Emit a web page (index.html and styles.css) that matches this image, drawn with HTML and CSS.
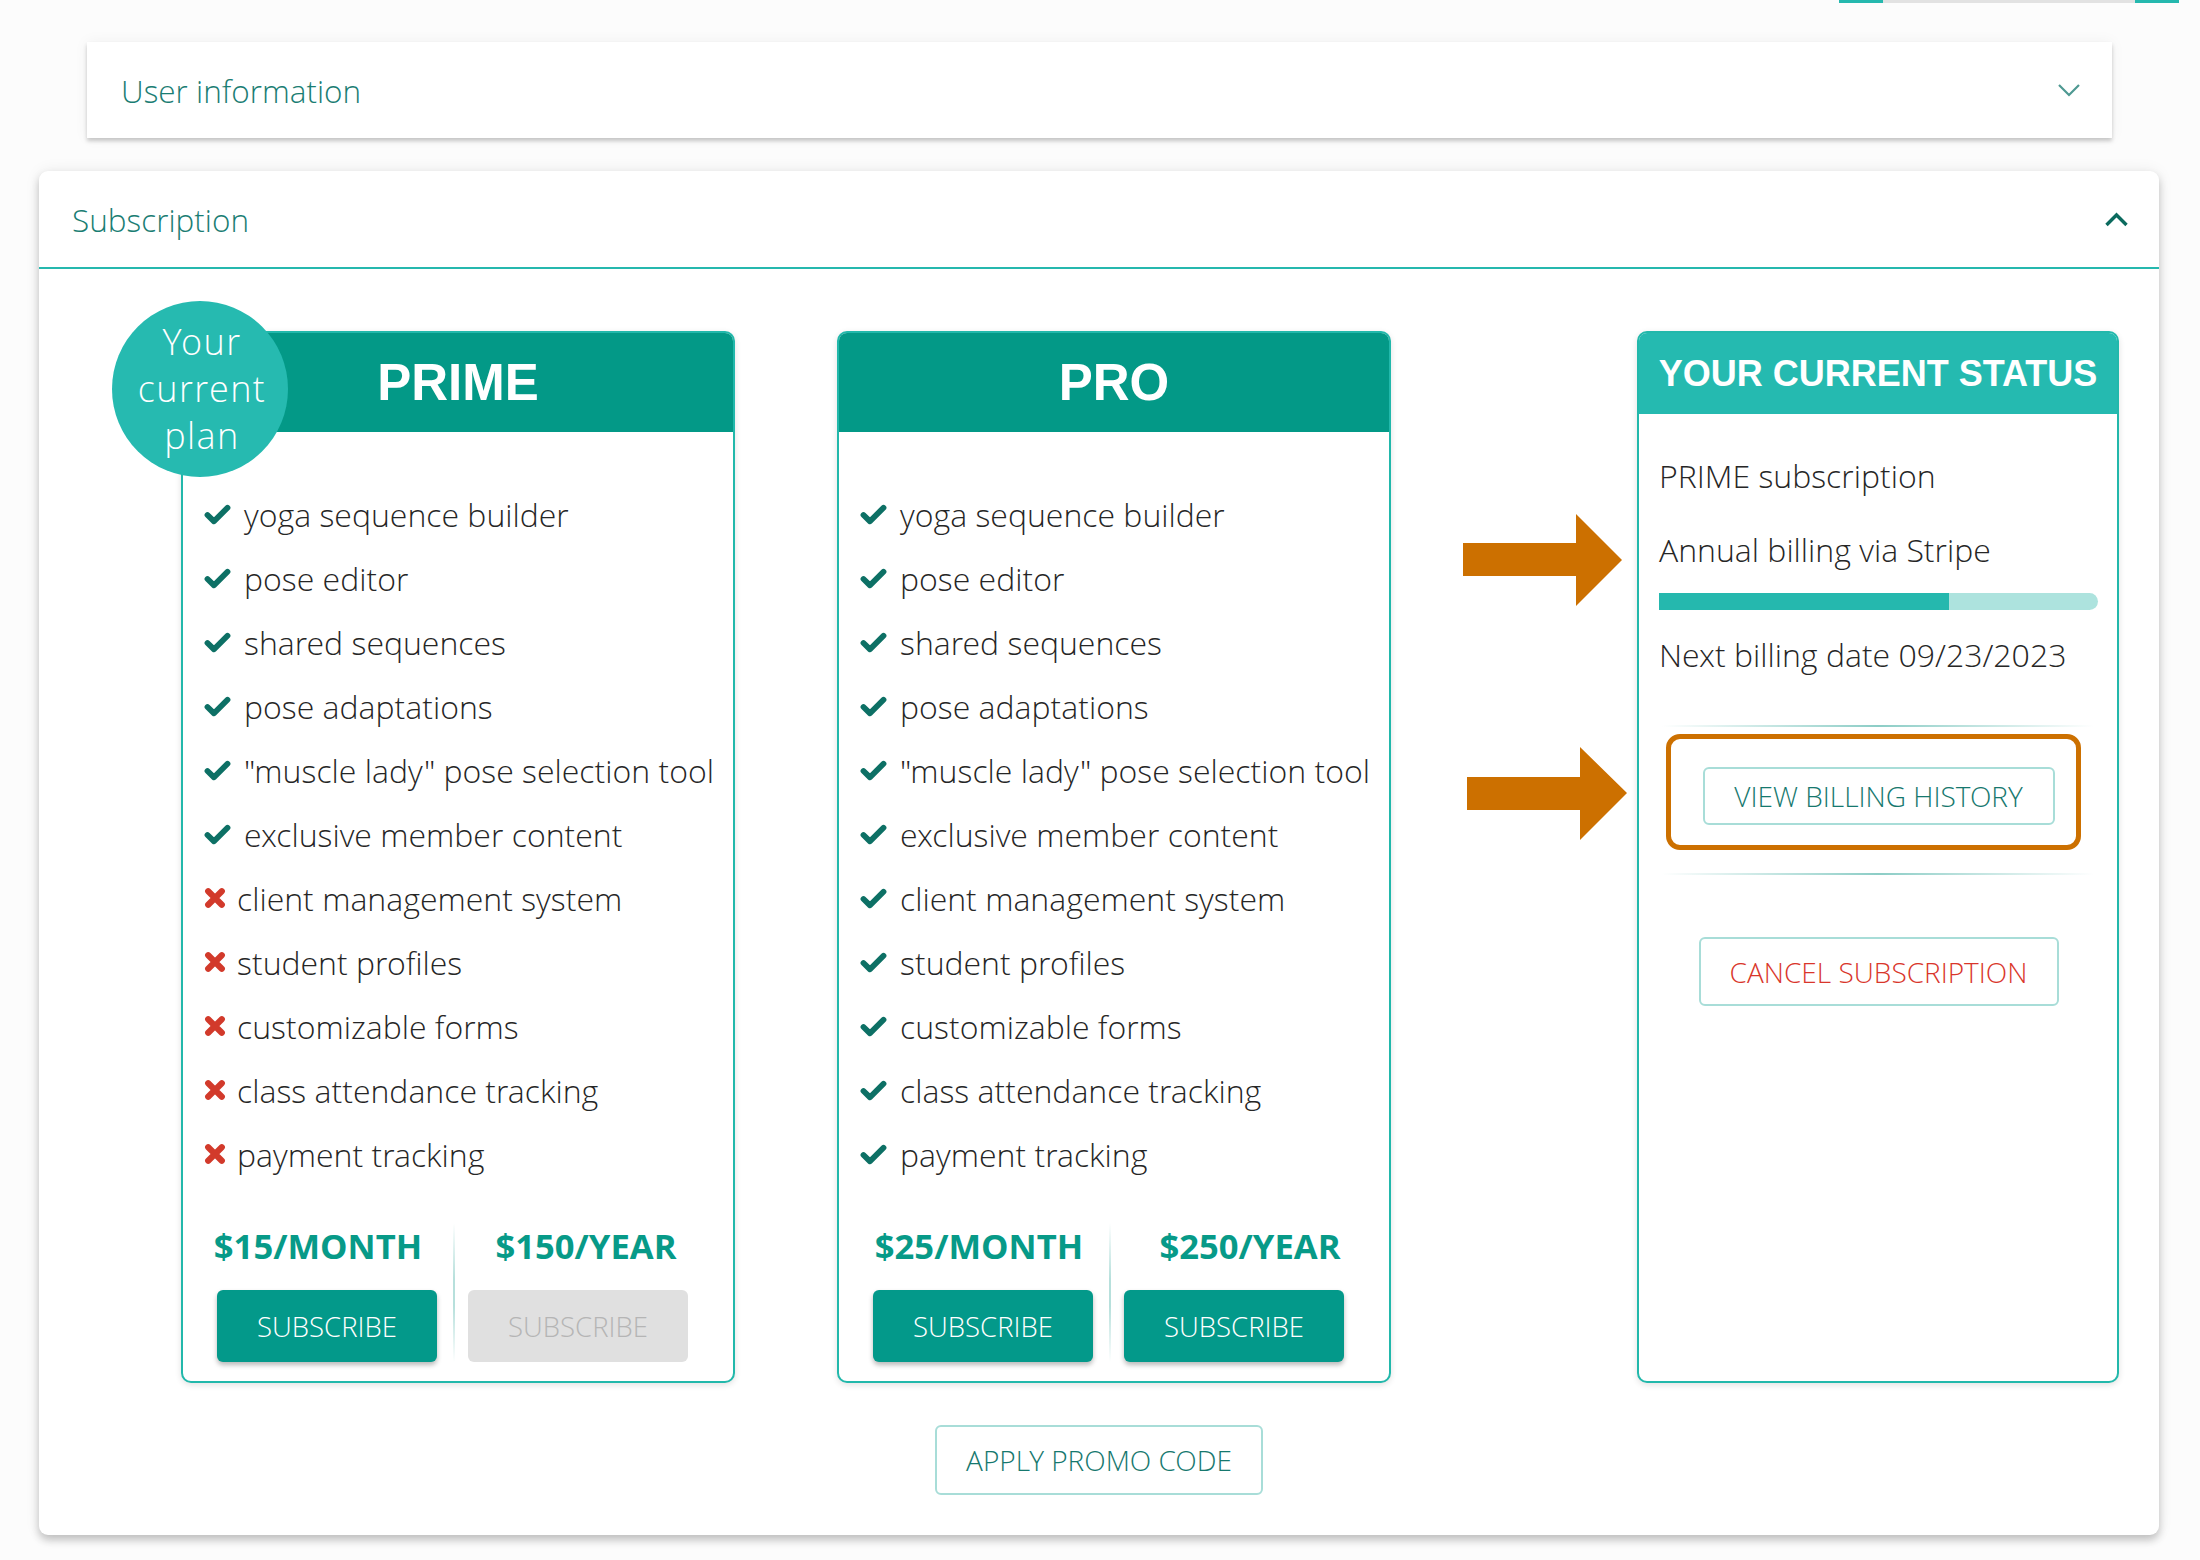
FILE: index.html
```html
<!DOCTYPE html>
<html lang="en">
<head>
<meta charset="utf-8">
<title>Subscription</title>
<link rel="stylesheet" href="styles.css">
</head>
<body>
<div class="tabline"><span class="seg-on"></span><span class="seg-mid"></span><span class="seg-on"></span></div>

<section class="panel-user">
  <span class="panel-title">User information</span>
  <svg class="chev-down" width="24" height="14" viewBox="0 0 24 14"><path d="M2 2 L12 12 L22 2" fill="none" stroke="#4e9992" stroke-width="2.2"/></svg>
</section>

<section class="panel-sub">
  <div class="sub-head">
    <span class="panel-title">Subscription</span>
    <svg class="chev-up" width="25" height="15" viewBox="0 0 25 15"><path d="M2.5 13 L12.5 3 L22.5 13" fill="none" stroke="#0b6a5e" stroke-width="3.4"/></svg>
  </div>
  <div class="sub-body">
    <div class="plans">
      <div class="plan plan-prime">
        <div class="badge"><span>Your</span><span>current</span><span>plan</span></div>
        <div class="plan-head">PRIME</div>
        <ul class="features">
          <li><svg class="ic-check" width="27" height="21" viewBox="0 0 27 21"><path d="M3.5 11 L10 17.3 L23.5 3.8"/></svg>yoga sequence builder</li>
          <li><svg class="ic-check" width="27" height="21" viewBox="0 0 27 21"><path d="M3.5 11 L10 17.3 L23.5 3.8"/></svg>pose editor</li>
          <li><svg class="ic-check" width="27" height="21" viewBox="0 0 27 21"><path d="M3.5 11 L10 17.3 L23.5 3.8"/></svg>shared sequences</li>
          <li><svg class="ic-check" width="27" height="21" viewBox="0 0 27 21"><path d="M3.5 11 L10 17.3 L23.5 3.8"/></svg>pose adaptations</li>
          <li><svg class="ic-check" width="27" height="21" viewBox="0 0 27 21"><path d="M3.5 11 L10 17.3 L23.5 3.8"/></svg>"muscle lady" pose selection tool</li>
          <li><svg class="ic-check" width="27" height="21" viewBox="0 0 27 21"><path d="M3.5 11 L10 17.3 L23.5 3.8"/></svg>exclusive member content</li>
          <li class="no"><svg class="ic-cross" width="22" height="22" viewBox="0 0 22 22"><path d="M4.2 4.2 L17.8 17.8 M17.8 4.2 L4.2 17.8"/></svg>client management system</li>
          <li class="no"><svg class="ic-cross" width="22" height="22" viewBox="0 0 22 22"><path d="M4.2 4.2 L17.8 17.8 M17.8 4.2 L4.2 17.8"/></svg>student profiles</li>
          <li class="no"><svg class="ic-cross" width="22" height="22" viewBox="0 0 22 22"><path d="M4.2 4.2 L17.8 17.8 M17.8 4.2 L4.2 17.8"/></svg>customizable forms</li>
          <li class="no"><svg class="ic-cross" width="22" height="22" viewBox="0 0 22 22"><path d="M4.2 4.2 L17.8 17.8 M17.8 4.2 L4.2 17.8"/></svg>class attendance tracking</li>
          <li class="no"><svg class="ic-cross" width="22" height="22" viewBox="0 0 22 22"><path d="M4.2 4.2 L17.8 17.8 M17.8 4.2 L4.2 17.8"/></svg>payment tracking</li>
        </ul>
        <div class="pricing">
          <div class="price-col first"><div class="price">$15/MONTH</div><button class="btn-sub">SUBSCRIBE</button></div>
          <div class="vdiv"></div>
          <div class="price-col second"><div class="price">$150/YEAR</div><button class="btn-sub disabled">SUBSCRIBE</button></div>
        </div>
      </div>

      <div class="plan plan-pro">
        <div class="plan-head">PRO</div>
        <ul class="features">
          <li><svg class="ic-check" width="27" height="21" viewBox="0 0 27 21"><path d="M3.5 11 L10 17.3 L23.5 3.8"/></svg>yoga sequence builder</li>
          <li><svg class="ic-check" width="27" height="21" viewBox="0 0 27 21"><path d="M3.5 11 L10 17.3 L23.5 3.8"/></svg>pose editor</li>
          <li><svg class="ic-check" width="27" height="21" viewBox="0 0 27 21"><path d="M3.5 11 L10 17.3 L23.5 3.8"/></svg>shared sequences</li>
          <li><svg class="ic-check" width="27" height="21" viewBox="0 0 27 21"><path d="M3.5 11 L10 17.3 L23.5 3.8"/></svg>pose adaptations</li>
          <li><svg class="ic-check" width="27" height="21" viewBox="0 0 27 21"><path d="M3.5 11 L10 17.3 L23.5 3.8"/></svg>"muscle lady" pose selection tool</li>
          <li><svg class="ic-check" width="27" height="21" viewBox="0 0 27 21"><path d="M3.5 11 L10 17.3 L23.5 3.8"/></svg>exclusive member content</li>
          <li><svg class="ic-check" width="27" height="21" viewBox="0 0 27 21"><path d="M3.5 11 L10 17.3 L23.5 3.8"/></svg>client management system</li>
          <li><svg class="ic-check" width="27" height="21" viewBox="0 0 27 21"><path d="M3.5 11 L10 17.3 L23.5 3.8"/></svg>student profiles</li>
          <li><svg class="ic-check" width="27" height="21" viewBox="0 0 27 21"><path d="M3.5 11 L10 17.3 L23.5 3.8"/></svg>customizable forms</li>
          <li><svg class="ic-check" width="27" height="21" viewBox="0 0 27 21"><path d="M3.5 11 L10 17.3 L23.5 3.8"/></svg>class attendance tracking</li>
          <li><svg class="ic-check" width="27" height="21" viewBox="0 0 27 21"><path d="M3.5 11 L10 17.3 L23.5 3.8"/></svg>payment tracking</li>
        </ul>
        <div class="pricing">
          <div class="price-col first"><div class="price">$25/MONTH</div><button class="btn-sub">SUBSCRIBE</button></div>
          <div class="vdiv"></div>
          <div class="price-col second"><div class="price">$250/YEAR</div><button class="btn-sub">SUBSCRIBE</button></div>
        </div>
      </div>

      <div class="status">
        <svg class="arrow arrow-1" width="160" height="94" viewBox="0 0 160 94"><path d="M0 30 H113 V1 L159 47 L113 93 V63 H0 Z"/></svg>
        <svg class="arrow arrow-2" width="160" height="94" viewBox="0 0 160 94"><path d="M0 31 H113 V1 L160 47 L113 94 V64 H0 Z"/></svg>
        <div class="highlight"></div>
        <div class="status-head">YOUR CURRENT STATUS</div>
        <div class="status-body">
          <p class="st-line first">PRIME subscription</p>
          <p class="st-line second">Annual billing via Stripe</p>
          <div class="progress"><div class="progress-fill" style="width:66%"></div></div>
          <p class="st-line third">Next billing date 09/23/2023</p>
          <div class="hdiv hdiv-1"></div>
          <button class="btn-outline btn-history">VIEW BILLING HISTORY</button>
          <div class="hdiv hdiv-2"></div>
          <button class="btn-outline btn-cancel">CANCEL SUBSCRIPTION</button>
        </div>
      </div>
    </div>
    <div class="promo-row"><button class="btn-outline btn-promo">APPLY PROMO CODE</button></div>
  </div>
</section>
</body>
</html>
```

FILE: styles.css
```css
html, body {
  margin: 0;
  padding: 0;
}
body {
  background: #fcfcfc;
  font-family: "Open Sans", "Noto Sans", sans-serif;
  color: #1c1c1c;
  width: 2200px;
  min-height: 1560px;
  overflow: hidden;
}

.tabline {
  display: flex;
  justify-content: flex-end;
  height: 3px;
  padding-right: 21px;
}
.seg-on { width: 44px; background: #25b8ae; }
.seg-mid { width: 252px; background: #e2e2e2; }

.panel-title {
  font-family: "Open Sans Light", "Open Sans", "Noto Sans", sans-serif;
  font-weight: 300;
  font-size: 31.5px;
  color: #1a7d73;
}

.panel-user {
  margin: 39px 88px 0 87px;
  height: 96px;
  background: #fff;
  box-shadow: 0 3px 4px rgba(0,0,0,0.2), 0 0 14px rgba(0,0,0,0.05);
  display: flex;
  align-items: center;
  justify-content: space-between;
  padding: 0 31px 0 34px;
}
.chev-down { display: block; }

.panel-sub {
  margin: 33px 41px 0 39px;
  background: #fff;
  border-radius: 9px;
  box-shadow: 0 5px 8px rgba(0,0,0,0.22), 0 0 16px rgba(0,0,0,0.07);
}
.sub-head {
  height: 96px;
  border-bottom: 2px solid #25b8ae;
  display: flex;
  align-items: center;
  justify-content: space-between;
  padding: 0 30px 0 33px;
}
.chev-up { display: block; }

.sub-body {
  padding: 62px 40px 40px 40px;
}
.plans {
  display: flex;
  align-items: stretch;
  padding-left: 102px;
}

.plan {
  position: relative;
  width: 554px;
  box-sizing: border-box;
  border: 2px solid #22b8ab;
  border-radius: 10px;
  background: #fff;
  box-shadow: 0 2px 6px rgba(0,0,0,0.12);
}
.plan + .plan { margin-left: 102px; }

.plan-head {
  height: 99px;
  background: #039987;
  border-radius: 8px 8px 0 0;
  display: flex;
  align-items: center;
  justify-content: center;
  color: #fff;
  font-family: "Liberation Sans", Arial, sans-serif;
  font-weight: 700;
  font-size: 51px;
}

.badge {
  position: absolute;
  left: -71px;
  top: -32px;
  width: 176px;
  height: 176px;
  border-radius: 50%;
  background: #26bab0;
  color: #fff;
  display: flex;
  flex-direction: column;
  align-items: center;
  justify-content: center;
  font-family: "Open Sans Light", "Open Sans", "Noto Sans", sans-serif;
  font-weight: 300;
  font-size: 36px;
  letter-spacing: 1.4px;
  line-height: 47px;
  padding: 0 0 2px 4px;
  box-sizing: border-box;
}

.features {
  list-style: none;
  margin: 0;
  padding: 50px 0 0 21px;
}
.features li {
  height: 64px;
  display: flex;
  align-items: center;
  font-family: "Open Sans Light", "Open Sans", "Noto Sans", sans-serif;
  font-weight: 300;
  font-size: 32px;
  color: #262626;
  white-space: nowrap;
}
.ic-check {
  flex: none;
  margin-right: 13px;
}
.ic-check path {
  fill: none;
  stroke: #0d7065;
  stroke-width: 5.8;
  stroke-linecap: round;
  stroke-linejoin: round;
}
.ic-cross {
  flex: none;
  margin-right: 11px;
}
.ic-cross path {
  fill: none;
  stroke: #d23a2b;
  stroke-width: 6.2;
  stroke-linecap: round;
}

.pricing {
  display: flex;
  margin-top: 37px;
  padding-bottom: 19px;
}
.price-col {
  display: flex;
  flex-direction: column;
  align-items: center;
}
.price-col.first { width: 220px; padding: 0 16px 0 34px; }
.price-col.second { width: 220px; padding: 0 0 0 13px; }
.plan-prime .price-col.first .price { margin-right: 18px; }
.plan-prime .price-col.second .price { margin-left: 16px; }
.plan-pro .price-col.first .price { margin-right: 8px; }
.plan-pro .price-col.second .price { margin-left: 32px; }
.price {
  font-weight: 700;
  font-size: 34.6px;
  line-height: 46px;
  color: #079a88;
  white-space: nowrap;
}
.vdiv {
  width: 2px;
  background: linear-gradient(to bottom, rgba(150,210,204,0), #b7e0dc 40%, #b7e0dc 60%, rgba(150,210,204,0));
}
.btn-sub {
  margin-top: 21px;
  width: 220px;
  height: 72px;
  border: 0;
  border-radius: 6px;
  background: #03998a;
  color: #fff;
  font-family: "Open Sans Light", "Open Sans", "Noto Sans", sans-serif;
  font-weight: 300;
  font-size: 27.5px;
  box-shadow: 0 3px 5px rgba(0,0,0,0.28);
  padding: 0;
}
.btn-sub.disabled {
  background: #e0e0e0;
  color: #b5b5b5;
  box-shadow: none;
}

.status {
  position: relative;
  width: 482px;
  margin-left: 246px;
  box-sizing: border-box;
  border: 2px solid #22b8ab;
  border-radius: 10px;
  background: #fff;
  box-shadow: 0 2px 6px rgba(0,0,0,0.12);
  display: flex;
  flex-direction: column;
}
.status-head {
  height: 81px;
  background: #25bab0;
  border-radius: 8px 8px 0 0;
  display: flex;
  align-items: center;
  justify-content: center;
  color: #fff;
  font-family: "Liberation Sans", Arial, sans-serif;
  font-weight: 700;
  font-size: 36px;
  white-space: nowrap;
}
.status-body {
  padding: 40px 19px 0 20px;
  display: flex;
  flex-direction: column;
}
.st-line {
  margin: 0;
  font-family: "Open Sans Light", "Open Sans", "Noto Sans", sans-serif;
  font-weight: 300;
  font-size: 32px;
  line-height: 44px;
  color: #262626;
  white-space: nowrap;
}
.st-line.second { margin-top: 30px; }
.st-line.third { margin-top: 23px; }
.progress {
  margin-top: 21px;
  height: 17px;
  background: #ade3de;
  border-radius: 0 9px 9px 0;
}
.progress-fill {
  height: 100%;
  background: #25b8ae;
}
.hdiv {
  height: 2px;
  margin: 0 4px 0 3px;
  background: linear-gradient(to right, rgba(140,205,198,0), #8ccdc6 50%, rgba(140,205,198,0));
}
.hdiv-1 { margin-top: 48px; }
.hdiv-2 { margin-top: 48px; }

.btn-outline {
  background: #fff;
  border: 2px solid #a8ddd8;
  border-radius: 6px;
  color: #16786e;
  font-family: "Open Sans Light", "Open Sans", "Noto Sans", sans-serif;
  font-weight: 300;
  font-size: 28px;
  padding: 0;
  white-space: nowrap;
}
.btn-history {
  align-self: center;
  margin-top: 40px;
  width: 352px;
  height: 58px;
}
.btn-cancel {
  align-self: center;
  margin-top: 62px;
  width: 360px;
  height: 69px;
  color: #d9362b;
}
.promo-row {
  display: flex;
  justify-content: center;
  margin-top: 42px;
}
.btn-promo {
  width: 328px;
  height: 70px;
}

.arrow {
  position: absolute;
  fill: #cc7000;
}
.arrow-1 { left: -176px; top: 180px; }
.arrow-2 { left: -172px; top: 413px; }
.highlight {
  position: absolute;
  left: 27px;
  top: 401px;
  width: 415px;
  height: 116px;
  box-sizing: border-box;
  border: 5px solid #cc7000;
  border-radius: 14px;
  pointer-events: none;
}
```
